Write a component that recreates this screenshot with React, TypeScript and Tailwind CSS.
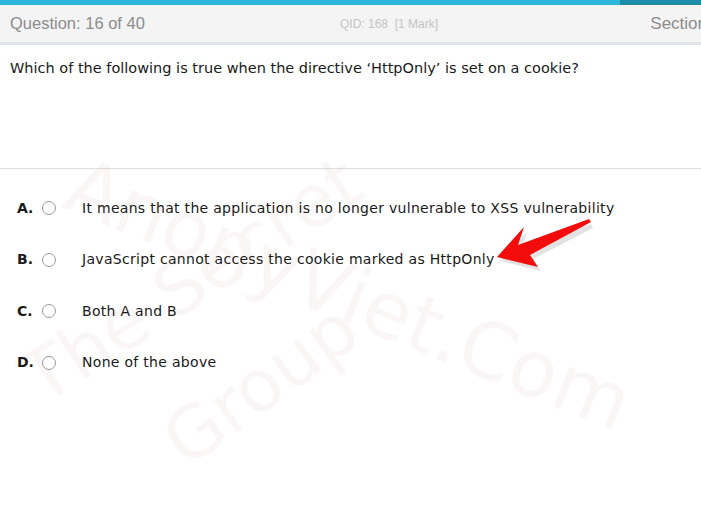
const options = [
  { key: 'A.', text: 'It means that the application is no longer vulnerable to XSS vulnerability' },
  { key: 'B.', text: 'JavaScript cannot access the cookie marked as HttpOnly' },
  { key: 'C.', text: 'Both A and B' },
  { key: 'D.', text: 'None of the above' },
]

function Arrow() {
  return (
    <svg className="absolute left-[490px] top-[212px]" width="110" height="62" viewBox="490 212 110 62">
      <polygon
        points="501,261 527,232 521,250 591,224 593,228 533,259 541,271"
        fill="#a0a0a0"
        opacity="0.3"
      />
      <polygon
        points="497,257 524,227 518,245 589,219 591,222 530,255 538,267"
        fill="#f20c0c"
      />
    </svg>
  )
}

export default function App() {
  return (
    <div className="relative w-[701px] h-[514px] bg-white overflow-hidden">
      <div
        className="absolute inset-0 pointer-events-none text-[#b06a6a] opacity-[0.05]"
        style={{ fontFamily: '"DejaVu Sans", Verdana, sans-serif' }}
      >
        <div className="absolute left-[92px] top-[128px] text-[78px] rotate-[22deg] origin-top-left whitespace-nowrap">
          AnonyViet.Com
        </div>
        <div className="absolute left-[0px] top-[340px] text-[72px] -rotate-[33deg] origin-top-left whitespace-nowrap">
          The Secret
        </div>
        <div className="absolute left-[140px] top-[405px] text-[72px] -rotate-[36deg] origin-top-left whitespace-nowrap">
          Group
        </div>
      </div>

      <div className="flex h-[5px]">
        <div className="w-[620px] bg-[#2bb6da]" />
        <div className="flex-1 bg-[#1e8ea8]" />
      </div>
      <div
        className="flex items-center h-[40px] pl-[10px] bg-[#f4f4f4] border-b-[3px] border-[#e1e4ea] whitespace-nowrap"
        style={{ fontFamily: '"Liberation Sans", Arial, sans-serif' }}
      >
        <span className="w-[330px] text-[16.5px] text-[#8c8c8c]">Question: 16 of 40</span>
        <span className="text-[12px] text-[#c4c4c4]">QID: 168&nbsp;&nbsp;[1 Mark]</span>
        <span className="flex-1" />
        <span className="text-[17px] text-[#8c8c8c] -mr-[6px]">Section</span>
      </div>

      <div
        className="h-[124px] border-b border-[#dedede] px-[10px] pt-[13px] text-[14.5px] text-[#1a1a1a]"
        style={{ fontFamily: '"DejaVu Sans", Tahoma, sans-serif' }}
      >
        Which of the following is true when the directive ‘HttpOnly’ is set on a cookie?
      </div>

      <div
        className="relative flex flex-col gap-[31.5px] pt-[29px] text-[14px] text-[#1a1a1a]"
        style={{ fontFamily: '"DejaVu Sans", Verdana, sans-serif' }}
      >
        {options.map((o) => (
          <div key={o.key} className="flex items-center h-[20px]">
            <span className="w-[25px] pl-[17px] box-content font-bold">{o.key}</span>
            <span className="w-[14px] h-[14px] rounded-full border border-[#999999] bg-white" />
            <span className="ml-[26px] tracking-[0.3px]">{o.text}</span>
          </div>
        ))}
      </div>

      <Arrow />
    </div>
  )
}
